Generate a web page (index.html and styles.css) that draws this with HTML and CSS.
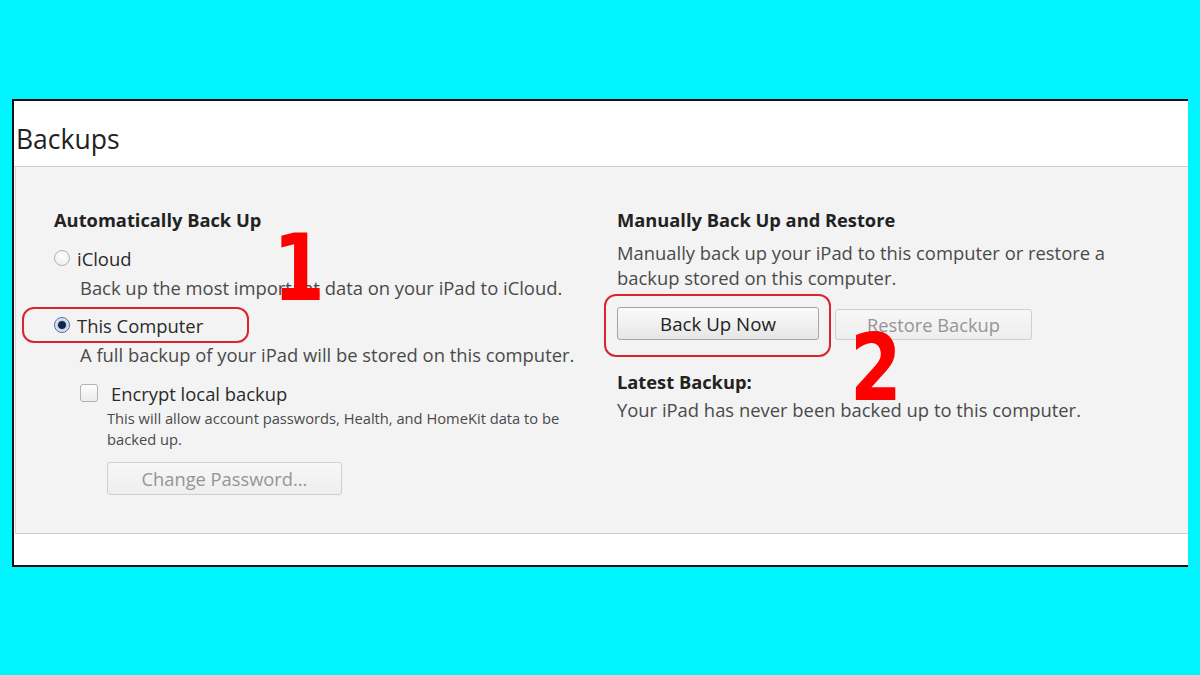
FILE: index.html
```html
<!DOCTYPE html>
<html>
<head>
<meta charset="utf-8">
<link rel="stylesheet" href="styles.css">
</head>
<body>
<div class="window">
  <div class="header"><h1 class="title">Backups</h1></div>
  <div class="panel">
    <div class="col left">
      <div class="heading">Automatically Back Up</div>
      <div class="option opt-icloud"><span class="radio"></span><span class="label">iCloud</span></div>
      <div class="desc">Back up the most important data on your iPad to iCloud.</div>
      <div class="option opt-computer"><span class="radio checked"></span><span class="label">This Computer</span></div>
      <div class="desc">A full backup of your iPad will be stored on this computer.</div>
      <div class="check-row"><span class="checkbox"></span><span class="label">Encrypt local backup</span></div>
      <div class="small">This will allow account passwords, Health, and HomeKit data to be<br>backed up.</div>
      <div class="btn btn-disabled btn-pass">Change Password...</div>
    </div>
    <div class="col right">
      <div class="heading">Manually Back Up and Restore</div>
      <div class="desc2">Manually back up your iPad to this computer or restore a<br>backup stored on this computer.</div>
      <div class="btn-row">
        <div class="btn btn-primary">Back Up Now</div>
        <div class="btn btn-disabled btn-restore">Restore Backup</div>
      </div>
      <div class="heading latest">Latest Backup:</div>
      <div class="desc">Your iPad has never been backed up to this computer.</div>
    </div>
  </div>
  <div class="footer"></div>
  <div class="mark ring ring-1"></div>
  <div class="mark ring ring-2"></div>
  <div class="mark num num-1">1</div>
  <div class="mark num num-2">2</div>
</div>
</body>
</html>
```
FILE: styles.css
```css
html, body { margin: 0; padding: 0; }
body {
  width: 1200px; height: 675px;
  background: #00f5ff;
  font-family: "Open Sans", "Noto Sans", sans-serif;
  overflow: hidden;
}
.window {
  position: relative;
  margin: 99px 0 0 12px;
  width: 1174px;
  height: 464px;
  border: 2px solid #111;
  border-right: none;
  background: #fff;
  display: flex;
  flex-direction: column;
}
.header {
  height: 65px;
  border-bottom: 1px solid #cfcfcf;
  display: flex;
  align-items: flex-end;
}
.title {
  margin: 0 0 10px 2px;
  font-weight: 400;
  font-size: 26.5px;
  line-height: 34px;
  color: #222;
}
.panel {
  height: 367px;
  box-sizing: border-box;
  background: #f3f3f3;
  border-left: 1px solid #d6d6d6;
  border-bottom: 1px solid #cfcfcf;
  margin-left: 1px;
  padding: 40px 0 0 38px;
  display: grid;
  grid-template-columns: 563px 1fr;
}
.footer { flex: 1; }
.heading {
  font-weight: 700;
  font-size: 18.3px;
  line-height: 26px;
  color: #222;
}
.option, .check-row {
  display: flex;
  align-items: center;
  height: 30px;
  font-size: 18.4px;
  color: #2a2a2a;
}
.opt-icloud { margin-top: 10px; }
.opt-computer { margin-top: 7px; }
.radio {
  width: 14px; height: 14px;
  border-radius: 50%;
  border: 1px solid #b4b4b4;
  background: radial-gradient(circle at 50% 40%, #fff, #e9e9e9);
  margin-right: 7px;
  box-sizing: content-box;
}
.radio.checked {
  border-color: #4a6d9a;
  background: radial-gradient(circle, #14254a 0 3.5px, #bfd0e6 4.5px, #e8eff8 7px);
}
.desc {
  padding-left: 26px;
  font-size: 18.4px;
  line-height: 30px;
  color: #4a4a4a;
}
.right .desc { padding-left: 0; }
.check-row {
  margin-top: 8px;
  padding-left: 26px;
}
.checkbox {
  width: 16px; height: 16px;
  border: 1px solid #b2b2b2;
  border-radius: 3px;
  background: linear-gradient(#fdfdfd, #ececec);
  margin-right: 13px;
}
.small {
  padding-left: 53px;
  font-size: 14.7px;
  line-height: 21px;
  color: #4a4a4a;
}
.btn {
  box-sizing: border-box;
  height: 33px;
  border-radius: 3px;
  display: flex;
  align-items: center;
  justify-content: center;
  font-size: 18.3px;
}
.btn-disabled {
  border: 1px solid #cfcfcf;
  background: linear-gradient(#f7f7f7, #eeeeee);
  color: #959595;
}
.btn-pass {
  margin: 12px 0 0 53px;
  width: 235px;
}
.btn-primary {
  width: 202px;
  border: 1px solid #a5a5a5;
  background: linear-gradient(#fbfbfb, #e6e6e6);
  color: #222;
  font-size: 18.7px;
}
.btn-restore { width: 197px; height: 31px; margin-top: 2px; }
.btn-row {
  display: flex;
  gap: 16px;
  margin-top: 17px;
}
.desc2 {
  margin-top: 7px;
  font-size: 18.4px;
  line-height: 25px;
  color: #4a4a4a;
}
.latest { margin-top: 29px; }
.mark { position: absolute; pointer-events: none; }
.ring {
  border: 2px solid #d8262f;
  border-radius: 12px;
  box-sizing: border-box;
}
.ring-1 { left: 8px; top: 206px; width: 227px; height: 36px; }
.ring-2 { left: 590px; top: 193px; width: 227px; height: 63px; }
.num {
  font-family: "DejaVu Sans", "Liberation Sans", sans-serif;
  font-weight: 700;
  font-size: 93px;
  line-height: 1;
  color: #ff0000;
  transform: scaleX(0.8);
  transform-origin: left top;
}
.num-1 { left: 259px; top: 121px; }
.num-2 { left: 836px; top: 221px; }
```
